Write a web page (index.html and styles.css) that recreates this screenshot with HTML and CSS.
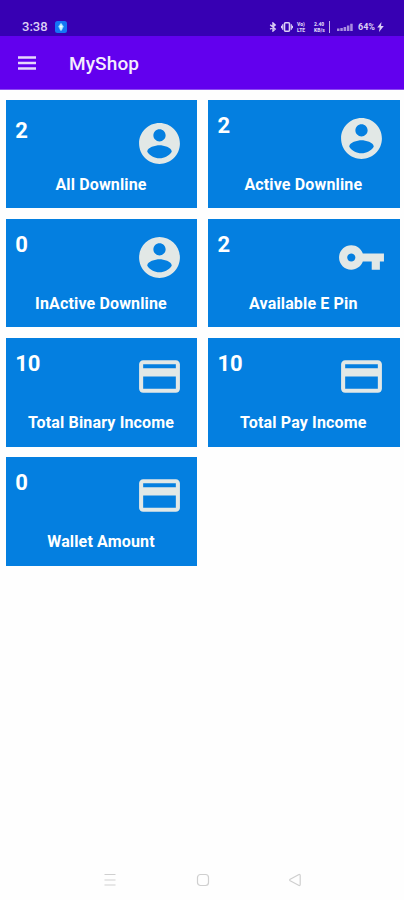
FILE: index.html
```html
<!DOCTYPE html>
<html lang="en">
<head>
    <meta charset="utf-8">
    <title>MyShop</title>
    <link rel="stylesheet" href="styles.css">
</head>
<body>
    <!-- shared icons -->
    <svg class="sprite">
        <symbol id="account" viewBox="0 0 24 24">
            <path d="M12 2C6.48 2 2 6.48 2 12s4.48 10 10 10 10-4.48 10-10S17.52 2 12 2zm0 3c1.66 0 3 1.34 3 3s-1.34 3-3 3-3-1.34-3-3 1.34-3 3-3zm0 14.2c-2.5 0-4.71-1.28-6-3.22.03-1.99 4-3.08 6-3.08 1.99 0 5.97 1.09 6 3.08-1.29 1.94-3.5 3.22-6 3.22z"/>
        </symbol>
        <symbol id="key" viewBox="0 0 24 24">
            <path d="M12.65 10C11.83 7.67 9.61 6 7 6c-3.31 0-6 2.69-6 6s2.69 6 6 6c2.61 0 4.83-1.67 5.65-4H17v4h4v-4h2v-4H12.65zM7 14c-1.1 0-2-.9-2-2s.9-2 2-2 2 .9 2 2-.9 2-2 2z"/>
        </symbol>
        <symbol id="card" viewBox="0 0 24 24">
            <path d="M20 4H4c-1.11 0-1.99.89-1.99 2L2 18c0 1.11.89 2 2 2h16c1.11 0 2-.89 2-2V6c0-1.11-.89-2-2-2zm0 14H4v-6h16v6zm0-10H4V6h16v2z"/>
        </symbol>
    </svg>

    <div class="status-bar">
        <span class="clock">3:38</span>
        <svg class="app-badge" viewBox="0 0 12 12">
            <rect width="12" height="12" rx="2.5" fill="#1475f5"/>
            <path d="M6 1.800L8.800 5.500 6.600 9.800H5.400L3.200 5.500z" fill="#8fdcff"/>
            <path d="M6 3.500v5M4.500 5.700h3" stroke="#fff"/>
        </svg>
        <div class="status-icons">
            <svg class="bluetooth" viewBox="0 0 8 10">
                <path d="M1.200 2.800l5 4.200L4 9V1l2.200 2-5 4.200" fill="none" stroke="currentColor" stroke-width="1.400"/>
            </svg>
            <svg class="vibrate" viewBox="0 0 12 10">
                <rect x="3.500" y=".8" width="5" height="8.400" rx="1" fill="none" stroke="currentColor" stroke-width="1.600"/>
                <path d="M1.700 2.200v5.600M.4 3.800v2.400M10.300 2.200v5.600M11.600 3.800v2.400" stroke="currentColor" stroke-width="1.200"/>
            </svg>
            <div class="stack volte"><span>Vo)</span><span>LTE</span></div>
            <div class="stack speed"><span>2.40</span><span>KB/s</span></div>
            <svg class="signal" viewBox="0 0 16 8">
                <path d="M0 5.500h2.500V8H0zM3.300 5h2.500v3H3.300zM6.600 4h2.500v4H6.600zM9.900 2.500h2.500V8H9.900zM13.200 .8h2.500V8h-2.500z" fill="currentColor"/>
            </svg>
            <span class="battery">64%</span>
            <svg class="bolt" viewBox="0 0 7 10">
                <path d="M4.500 0L.2 5.500h2.500L2 10l4.800-6H4z" fill="currentColor"/>
            </svg>
        </div>
    </div>

    <div class="toolbar">
        <svg class="menu" viewBox="0 0 18 14">
            <path d="M0 1.500h18M0 7h18M0 12.500h18" stroke="currentColor" stroke-width="2.300"/>
        </svg>
        <h1 class="title">MyShop</h1>
    </div>

    <div class="grid">
        <div class="tile">
            <div class="tile-top lower">
                <span class="count">2</span>
                <svg class="icon"><use href="#account"/></svg>
            </div>
            <div class="label">All Downline</div>
        </div>
        <div class="tile">
            <div class="tile-top">
                <span class="count">2</span>
                <svg class="icon"><use href="#account"/></svg>
            </div>
            <div class="label">Active Downline</div>
        </div>
        <div class="tile">
            <div class="tile-top">
                <span class="count">0</span>
                <svg class="icon"><use href="#account"/></svg>
            </div>
            <div class="label">InActive Downline</div>
        </div>
        <div class="tile">
            <div class="tile-top">
                <span class="count">2</span>
                <svg class="icon"><use href="#key"/></svg>
            </div>
            <div class="label">Available E Pin</div>
        </div>
        <div class="tile">
            <div class="tile-top">
                <span class="count">10</span>
                <svg class="icon"><use href="#card"/></svg>
            </div>
            <div class="label">Total Binary Income</div>
        </div>
        <div class="tile">
            <div class="tile-top">
                <span class="count">10</span>
                <svg class="icon"><use href="#card"/></svg>
            </div>
            <div class="label">Total Pay Income</div>
        </div>
        <div class="tile">
            <div class="tile-top">
                <span class="count">0</span>
                <svg class="icon"><use href="#card"/></svg>
            </div>
            <div class="label">Wallet Amount</div>
        </div>
    </div>

    <div class="nav-bar">
        <svg viewBox="0 0 14 14"><path d="M1.500 1.500h11M1.500 7h11M1.500 12h11"/></svg>
        <svg viewBox="0 0 14 14"><rect x="1.500" y="1.500" width="11" height="11" rx="3"/></svg>
        <svg viewBox="0 0 14 14"><path d="M11 1.500L2.200 6.200q-1 .8 0 1.600L11 12.500q1.200.2 1.200-1v-9q0-1.200-1.200-1z"/></svg>
    </div>
</body>
</html>
```
FILE: styles.css
```css
* {
    box-sizing: border-box;
}
body {
    margin: 0;
    height: 900px;
    display: flex;
    flex-direction: column;
    overflow: hidden;
    background: #fefefe;
    font-family: Roboto, sans-serif;
    color: #fff;
}
.sprite {
    display: none;
}
.status-bar {
    height: 36px;
    padding: 18px 20px 0 22px;
    display: flex;
    align-items: center;
    background: #3700b3;
    color: #dccff5;
}
.clock {
    width: 26px;
    font-size: 13px;
    font-weight: 500;
    line-height: 18px;
}
.app-badge {
    width: 12px;
    height: 12px;
    margin-left: 7px;
}
.status-icons {
    margin-left: auto;
    display: flex;
    align-items: center;
}
.bluetooth {
    width: 8px;
    height: 10px;
    margin-right: 4px;
}
.vibrate {
    width: 12px;
    height: 10px;
    margin-right: 4px;
}
.stack {
    display: flex;
    flex-direction: column;
    font-size: 5px;
    font-weight: 900;
    line-height: 6px;
}
.volte {
    width: 13px;
    margin-right: 4px;
}
.speed {
    width: 16px;
    margin-right: 7px;
    border-right: 1px solid #c3b0ea;
}
.signal {
    width: 16px;
    height: 8px;
    margin-right: 5px;
    color: #a98ce0;
}
.battery {
    width: 18px;
    font-size: 9px;
    font-weight: 700;
    line-height: 10px;
}
.bolt {
    width: 7px;
    height: 10px;
    margin-left: 1px;
}
.toolbar {
    height: 54px;
    padding: 0 18px;
    display: flex;
    align-items: center;
    background: #6200ee;
    border-bottom: 1px solid #8d4cf2;
    color: #e6d7fc;
}
.menu {
    width: 18px;
    height: 14px;
    margin-right: 33px;
}
.title {
    margin: 0;
    padding-top: 2px;
    font-size: 19px;
    font-weight: 500;
    letter-spacing: .1px;
    color: #f4edfe;
}
.grid {
    padding: 9.500px 4.400px 0 5.700px;
    display: grid;
    grid-template-columns: 1fr 1fr;
    grid-auto-rows: 108.600px;
    gap: 10.700px;
}
.tile {
    padding: 14px 13.500px 0 9.500px;
    background: #047fe0;
}
.tile-top {
    height: 49px;
    display: flex;
    justify-content: space-between;
}
.lower {
    margin-top: 5px;
    margin-bottom: -5px;
}
.count {
    font-size: 22px;
    font-weight: 700;
    line-height: 24px;
}
.icon {
    width: 49px;
    height: 49px;
    fill: #e2e8e6;
}
.label {
    margin: 12px -4px 0 0;
    padding-right: 1px;
    font-size: 16px;
    font-weight: 700;
    letter-spacing: .15px;
    line-height: 20px;
    text-align: center;
}
.nav-bar {
    height: 40px;
    margin-top: auto;
    padding: 0 102px 0 103px;
    display: flex;
    align-items: center;
    justify-content: space-between;
}
.nav-bar svg {
    width: 14px;
    height: 14px;
    fill: none;
    stroke: #cfcfcf;
    stroke-width: 1.200;
}
```
